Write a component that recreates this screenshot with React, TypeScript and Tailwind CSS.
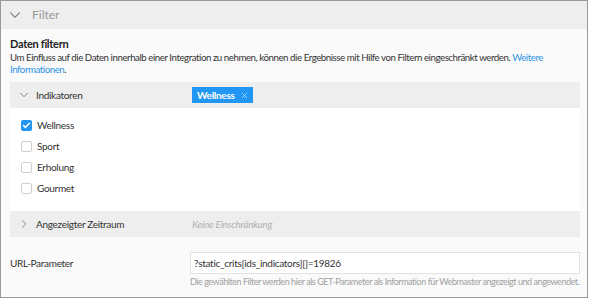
import { ChevronDown, ChevronRight, Check, X } from 'lucide-react';

const indicators = [
  { label: 'Wellness', checked: true },
  { label: 'Sport', checked: false },
  { label: 'Erholung', checked: false },
  { label: 'Gourmet', checked: false },
];

export default function App() {
  return (
    <div className="w-[590px] h-[300px] bg-white tracking-[-0.3px]" style={{ fontFamily: 'Lato, "Noto Sans", sans-serif' }}>
      <div className="w-[588px] h-[298px] border border-[#9a9a9a] bg-[#fafafa] flex flex-col">
        {/* Header */}
        <div className="h-[28px] bg-[#eeeeee] flex items-center pl-[5px] gap-[8px] text-[12px] text-[#999] shrink-0 tracking-normal">
          <ChevronDown size={18} strokeWidth={1.5} className="text-[#8a8a8a]" />
          <span>Filter</span>
        </div>

        <div className="pl-[9px] pr-[7px] pt-[8px]">
          <h2 className="text-[11px] font-bold text-[#222] leading-[14px]">Daten filtern</h2>
          <p className="text-[9.7px] tracking-[-0.45px] text-[#333] leading-[12px]">
            Um Einfluss auf die Daten innerhalb einer Integration zu nehmen, können die Ergebnisse mit Hilfe von Filtern eingeschränkt werden.{' '}
            <span className="text-[#2f94e6]">Weitere Informationen</span>.
          </p>

          {/* Indikatoren */}
          <div className="mt-[7px] h-[26px] bg-[#eeeeee] flex items-center pl-[7px]">
            <ChevronDown size={14} strokeWidth={1.5} className="text-[#777]" />
            <span className="ml-[5px] w-[156px] shrink-0 text-[10px] text-[#333]">Indikatoren</span>
            <span className="h-[16px] bg-[#2196f3] text-white text-[10px] font-bold flex items-center pl-[5px] pr-[4px] gap-[5px]">
              Wellness
              <X size={9} strokeWidth={2} className="text-[#bfe0fb]" />
            </span>
          </div>

          <div className="bg-white pt-[7px] pb-[12px] pl-[11px] flex flex-col">
            {indicators.map((item) => (
              <div key={item.label} className="flex items-center gap-[5px] h-[21px]">
                {item.checked ? (
                  <span className="w-[11px] h-[11px] rounded-[2px] bg-[#2196f3] flex items-center justify-center">
                    <Check size={9} strokeWidth={4} className="text-white" />
                  </span>
                ) : (
                  <span className="w-[11px] h-[11px] rounded-[2px] border border-[#cfcfcf] bg-white" />
                )}
                <span className="text-[10px] text-[#333]">{item.label}</span>
              </div>
            ))}
          </div>

          {/* Zeitraum */}
          <div className="h-[26px] bg-[#eeeeee] flex items-center pl-[7px]">
            <ChevronRight size={14} strokeWidth={1.5} className="text-[#777]" />
            <span className="ml-[5px] w-[156px] shrink-0 text-[10px] text-[#333]">Angezeigter Zeitraum</span>
            <span className="text-[10px] italic text-[#b0b0b0]">Keine Einschränkung</span>
          </div>

          {/* URL */}
          <div className="mt-[15px] flex">
            <span className="w-[180px] shrink-0 text-[10px] text-[#333] pt-[5px] leading-[12px]">URL-Parameter</span>
            <div className="flex-1 min-w-0">
              <div className="h-[22px] bg-white border border-[#e2e2e2] flex items-center px-[3px] text-[10px] text-[#333]">
                ?static_crits[ids_indicators][]=19826
              </div>
              <p className="mt-[2px] text-[9px] tracking-[-0.45px] leading-[12px] text-[#a0a0a0] whitespace-nowrap">
                Die gewählten Filter werden hier als GET-Parameter als Information für Webmaster angezeigt und angewendet.
              </p>
            </div>
          </div>
        </div>
      </div>
    </div>
  );
}
